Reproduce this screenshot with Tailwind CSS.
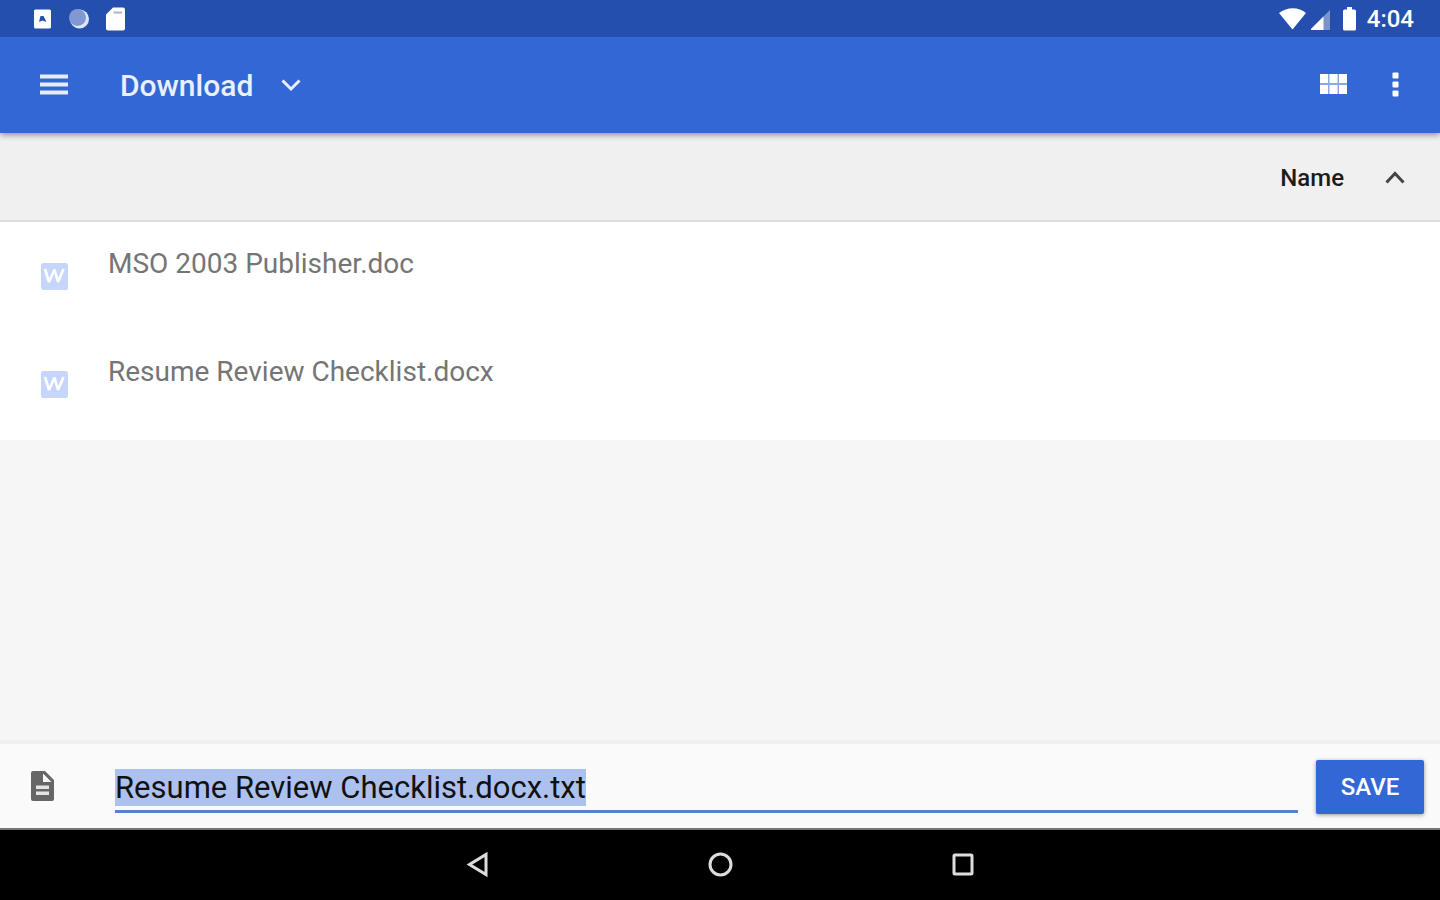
<!DOCTYPE html>
<html lang="en">
<head>
    <meta charset="UTF-8">
    <meta name="viewport" content="width=device-width, initial-scale=1.0">
    <title>Download</title>
    <script src="https://cdn.jsdelivr.net/npm/@tailwindcss/browser@4"></script>
</head>
<body class="flex flex-col h-screen bg-[#f6f6f6] font-['Roboto',sans-serif] text-black overflow-hidden">
    <!-- status bar -->
    <div class="relative z-20 flex items-center justify-between shrink-0 h-[37px] pl-[33px] pr-[26px] bg-[#254fae] text-white">
        <div class="flex items-center gap-4">
            <svg class="w-[19px] h-6" viewBox="0 0 19 24"><rect x="1" y="2.500" width="17" height="19" rx="1.5" fill="#fff"/><path d="M6 15L7.500 9H10.500L13.500 15L9.500 13.500z" fill="#254fae"/></svg>
            <svg class="w-[22px] h-6" viewBox="0 0 22 24"><circle cx="11.500" cy="12" r="9.500" fill="#dfe7f7"/><circle cx="9.500" cy="10.500" r="8.500" fill="#8298d2"/></svg>
            <svg class="w-5 h-6" viewBox="0 0 20 24"><path d="M7 0.500H17Q19 0.500 19 2.500V21.500Q19 23.500 17 23.500H2Q0 23.500 0 21.500V7.500z" fill="#fff"/><path d="M7.500 5.500H16" stroke="#a9b4cf" stroke-width="2"/></svg>
        </div>
        <div class="flex items-center">
            <svg class="w-7 h-6" viewBox="0 0 28 24"><path d="M0 6C8 -0.500 20 -0.500 27 6L13.500 22.500z" fill="#fff"/></svg>
            <svg class="w-5 h-6 ml-1" viewBox="0 0 20 24"><path d="M19 3V23H-1z" fill="#7c94ce"/><path d="M12.500 9.500V23H-1z" fill="#fff"/></svg>
            <svg class="w-[14px] h-6 ml-3" viewBox="0 0 14 24"><path d="M4 0H9V2.500H11.500Q13 2.500 13 4V22Q13 23.500 11.500 23.500H1.500Q0 23.500 0 22V4Q0 2.500 1.500 2.500H4z" fill="#fff"/></svg>
            <span class="ml-[10px] text-2xl leading-6 font-medium">4:04</span>
        </div>
    </div>

    <!-- toolbar -->
    <header class="relative z-10 flex items-center shrink-0 h-24 px-9 bg-[#3367d6] text-white shadow-[0_2px_6px_rgba(0,0,0,0.4)]">
        <button aria-label="Menu">
            <svg class="w-9 h-9" viewBox="0 0 36 36" fill="#e6edfb"><path d="M4 7.500h28v4H4zM4 15.500h28v4H4zM4 23.500h28v4H4z"/></svg>
        </button>
        <button class="flex items-center ml-12 pt-[2px] text-[30px] leading-9 font-medium text-[#e9effc]">
            Download
            <svg class="w-5 h-5 ml-7" viewBox="0 0 20 20" fill="none" stroke="currentColor" stroke-width="3"><path d="M1.500 4.500L10 13L18.500 4.500"/></svg>
        </button>
        <div class="flex items-center ml-auto">
            <button aria-label="Grid view">
                <svg class="w-7 h-7" viewBox="0 0 28 28"><path d="M0 3h27v20H0z" fill="#8ba6e8"/><path d="M0 3h8v9H0zM9.500 3h8v9h-8zM19 3h8v9h-8zM0 14h8v9H0zM9.500 14h8v9h-8zM19 14h8v9h-8z" fill="#fff"/></svg>
            </button>
            <button class="ml-[42px]" aria-label="More options">
                <svg class="w-[14px] h-7" viewBox="0 0 14 28" fill="#fff"><rect x="2.500" y="1.500" width="6" height="6" rx="1"/><rect x="2.500" y="10.500" width="6" height="6" rx="1"/><rect x="2.500" y="19.500" width="6" height="6" rx="1"/></svg>
            </button>
        </div>
    </header>

    <!-- sort bar -->
    <div class="flex items-center justify-end shrink-0 h-[89px] pt-[2px] px-[34px] bg-[#f0f0f0] border-b-2 border-[#dedede]">
        <button class="flex items-center gap-10 text-2xl text-[#1c1c1c] font-medium">
            Name
            <svg class="w-[22px] h-5" viewBox="0 0 22 20" fill="none" stroke="#444" stroke-width="3"><path d="M2.500 14.500L11 5.500L19.500 14.500"/></svg>
        </button>
    </div>

    <!-- files -->
    <ul class="shrink-0 pb-[2px] bg-white text-[28px] leading-8 text-[#757575]">
        <li class="flex items-start h-[108px] px-10 pt-[26px]">
            <svg class="w-7 h-7 mt-[14px] mr-10" viewBox="0 0 28 28"><rect x="1" y="1" width="27" height="27" rx="2.500" fill="#c5d6fa"/><path d="M5 7L9 20L14.500 7.500L18 20L23.500 7" fill="none" stroke="#fff" stroke-width="2.600" stroke-linejoin="bevel"/></svg>
            <span>MSO 2003 Publisher.doc</span>
        </li>
        <li class="flex items-start h-[108px] px-10 pt-[26px]">
            <svg class="w-7 h-7 mt-[14px] mr-10" viewBox="0 0 28 28"><rect x="1" y="1" width="27" height="27" rx="2.500" fill="#c5d6fa"/><path d="M5 7L9 20L14.500 7.500L18 20L23.500 7" fill="none" stroke="#fff" stroke-width="2.600" stroke-linejoin="bevel"/></svg>
            <span>Resume Review Checklist.docx</span>
        </li>
    </ul>

    <!-- save bar -->
    <form class="flex items-center shrink-0 h-[88px] mt-auto pt-[2px] pl-[30px] pr-4 bg-[#fafafa] border-t-4 border-[#f0f0f0]">
        <label for="filename" aria-label="File name">
            <svg class="w-6 h-8" viewBox="0 0 24 32"><path d="M3 0H15L24 9V28Q24 30 22 30H3Q1 30 1 28V2Q1 0 3 0z" fill="#666"/><path d="M13 2.500V11H21.500z" fill="#fafafa"/><path d="M6 14.500H19V18H6zM6 20.500H19V24H6z" fill="#e4e4e4"/></svg>
        </label>
        <input type="text" id="filename" value="Resume Review Checklist.docx.txt" autocomplete="off" spellcheck="false" class="grow min-w-0 h-[52px] ml-[61px] mr-[18px] pt-1 border-b-3 border-[#5c7dd0] text-[31px] leading-10 text-[#111] outline-none selection:bg-[#adc1ee] selection:text-[#111]">
        <button type="button" class="w-[108px] h-[54px] rounded-[2px] bg-[#3367d6] text-white text-2xl font-medium shadow-[0_1px_4px_rgba(0,0,0,0.4)]">SAVE</button>
    </form>

    <!-- navigation bar -->
    <nav class="flex items-center justify-center gap-[215px] shrink-0 h-[72px] bg-black border-t-2 border-[#777]">
        <button aria-label="Back">
            <svg class="w-7 h-7" viewBox="0 0 28 28" fill="none" stroke="#ddd" stroke-width="3"><path d="M23 3.500V23.500L6.500 13.500z"/></svg>
        </button>
        <button aria-label="Home">
            <svg class="w-7 h-7" viewBox="0 0 28 28" fill="none" stroke="#ddd" stroke-width="3"><circle cx="14.500" cy="13.500" r="10.500"/></svg>
        </button>
        <button aria-label="Overview">
            <svg class="w-7 h-7" viewBox="0 0 28 28" fill="none" stroke="#ddd" stroke-width="3"><rect x="5" y="4" width="18" height="19" rx="1"/></svg>
        </button>
    </nav>
    <script>
        var filename = document.getElementById('filename');
        filename.focus();
        filename.select();
    </script>
</body>
</html>
